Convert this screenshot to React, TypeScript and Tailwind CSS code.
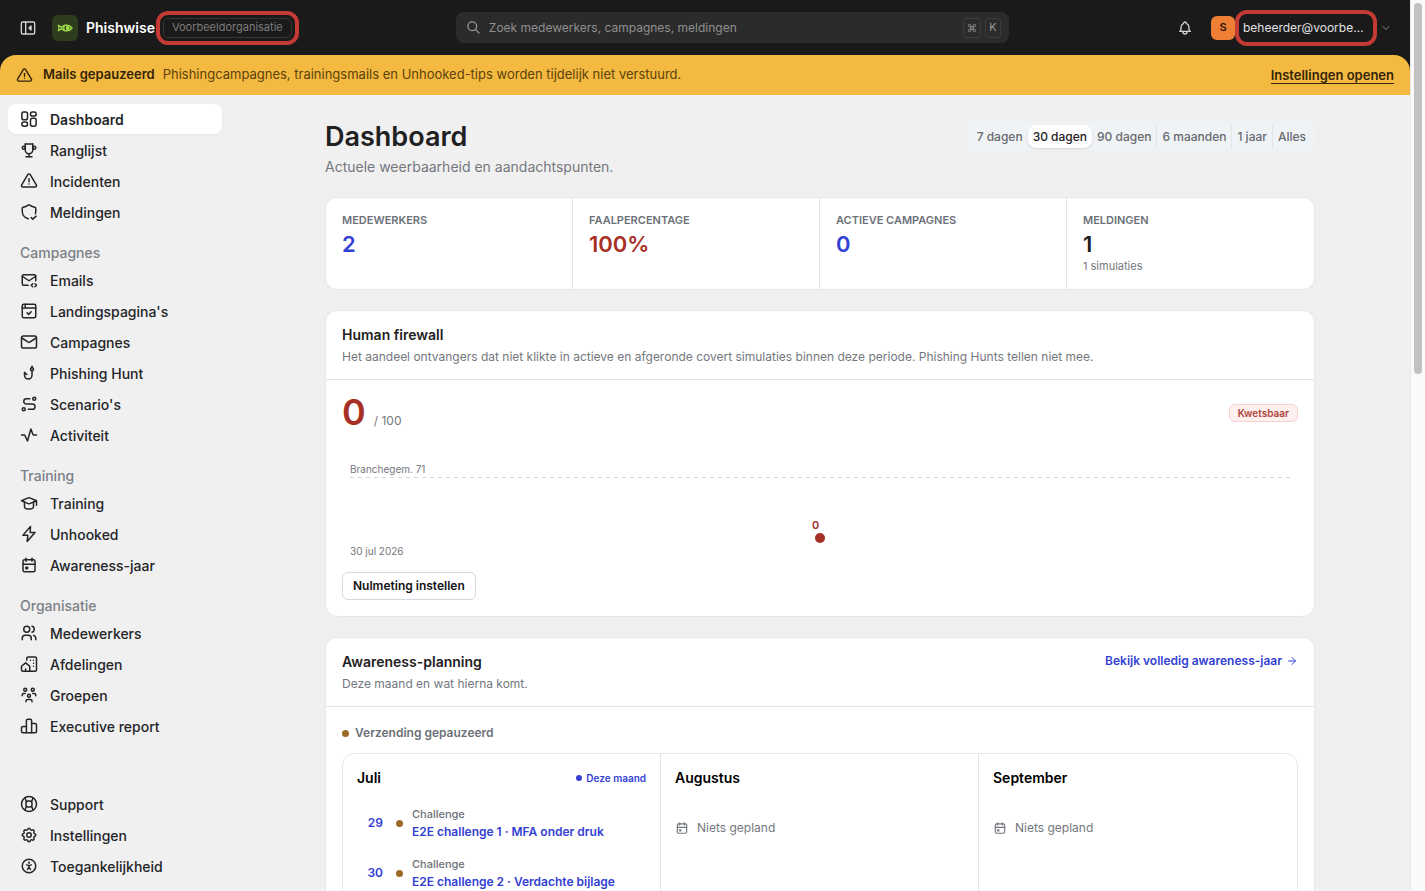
import type { ComponentType, ReactNode } from 'react'
import { useState } from 'react'
import clsx from 'clsx'
import { ArrowRight, ChevronDown, Command } from 'lucide-react'
import {
  TbAccessible,
  TbAlertTriangle,
  TbBell,
  TbCalendarEvent,
  TbFishHook,
  TbMail,
  TbMailCode,
  TbRoute,
  TbSearch,
  TbSettings,
  TbTrophy,
  TbUsers,
  TbUsersGroup,
} from 'react-icons/tb'

type IconProps = { className?: string }

type NavItem = {
  label: string
  icon: ComponentType<IconProps>
}

type NavGroup = {
  title?: string
  items: NavItem[]
}

function Glyph({ className, children }: IconProps & { children: ReactNode }) {
  return (
    <svg
      className={className}
      viewBox="0 0 24 24"
      fill="none"
      stroke="currentColor"
      strokeWidth="2"
      strokeLinecap="round"
      strokeLinejoin="round"
      aria-hidden="true">
      {children}
    </svg>
  )
}

const PanelIcon = (props: IconProps) => (
  <Glyph {...props}>
    <rect x="2" y="3" width="20" height="18" rx="2" />
    <path d="M8.500 3v18" />
    <path d="M16.500 9v6l-3-3z" fill="currentColor" />
  </Glyph>
)

const DashboardIcon = (props: IconProps) => (
  <Glyph {...props}>
    <rect x="2.500" y="2.500" width="7.500" height="10.500" rx="2.500" />
    <rect x="14" y="2.500" width="7.500" height="5.500" rx="2.500" />
    <rect x="14" y="11" width="7.500" height="10.500" rx="2.500" />
    <rect x="2.500" y="16" width="7.500" height="5.500" rx="2.500" />
  </Glyph>
)

const ShieldIcon = (props: IconProps) => (
  <Glyph {...props}>
    <path d="M11 21c-5-1.500-8-5-8-10.500V7c0-.8.500-1.200 1.200-1.400C7 5 9 4 11 2.700a1.800 1.800 0 0 1 2 0C15 4 17 5 19.800 5.600c.7.200 1.200.6 1.200 1.400v4c0 1.200-.2 2.300-.6 3.300" />
    <path d="M15 19.500l2 2l4.500-4" />
  </Glyph>
)

const LandingIcon = (props: IconProps) => (
  <Glyph {...props}>
    <rect x="3" y="3" width="18" height="18" rx="2" />
    <path d="M3 8h18M7 3v5M9.500 14.500l2 2l3.500-3.500" />
  </Glyph>
)

const MailIcon = (props: IconProps) => (
  <Glyph {...props}>
    <rect x="2" y="4" width="20" height="16" rx="2.500" />
    <path d="M3 7l8 5.300a2 2 0 0 0 2 0L21 7" />
  </Glyph>
)

const ActivityIcon = (props: IconProps) => (
  <Glyph {...props}>
    <path d="M2 12h3.500c.6 0 1 .3 1.200.8L10 20l4.500-16l2.700 7.300c.2.500.6.7 1.100.7H22" />
  </Glyph>
)

const TrainingIcon = (props: IconProps) => (
  <Glyph {...props}>
    <path d="M22 9L13 5.200a2.500 2.500 0 0 0-2 0L2 9l9 3.800a2.500 2.500 0 0 0 2 0L22 9v6" />
    <path d="M6 11v6c0 1.500 2.500 3 6 3s6-1.500 6-3v-6" />
  </Glyph>
)

const BoltIcon = (props: IconProps) => (
  <Glyph {...props}>
    <path d="M14 2L4 13.500h6.500L9.500 22L20 10h-6.500z" />
  </Glyph>
)

const BuildingIcon = (props: IconProps) => (
  <Glyph {...props}>
    <path d="M9 7V4.500a2 2 0 0 1 2-2h9a2 2 0 0 1 2 2v15a2 2 0 0 1-2 2h-7" />
    <path d="M2 15l5.500-4.500L13 15v6.500H4a2 2 0 0 1-2-2zM7.500 21.500v-3" />
    <path d="M14 7h.01M18 7h.01M18 11h.01M18 15h.01" />
  </Glyph>
)

const ReportIcon = (props: IconProps) => (
  <Glyph {...props}>
    <path d="M8.500 21V5a2 2 0 0 1 2-2h3a2 2 0 0 1 2 2v16" />
    <path d="M15.500 8.500H20a2 2 0 0 1 2 2V19a2 2 0 0 1-2 2H4a2 2 0 0 1-2-2v-4.500a2 2 0 0 1 2-2h4.500" />
  </Glyph>
)

const SupportIcon = (props: IconProps) => (
  <Glyph {...props}>
    <circle cx="12" cy="12" r="10" />
    <rect x="8" y="8" width="8" height="8" rx="3" />
    <path d="M8.500 8.500L6.500 4M15.500 8.500l2-4.500M8.500 15.500l-2 4.500M15.500 15.500l2 4.500" />
  </Glyph>
)

const FishLogo = (props: IconProps) => (
  <Glyph {...props}>
    <path d="M2 8C3.500 12 3.500 12 2 16L7 13c3.500 4.500 11 5 15.500-1C18 6 10.500 6.500 7 11z" />
    <path d="M11 8.500c-1.500 2.500-1.500 4.500 0 7" />
    <circle cx="16" cy="12" r="2" fill="currentColor" />
  </Glyph>
)

const navGroups: NavGroup[] = [
  {
    items: [
      { label: 'Dashboard', icon: DashboardIcon },
      { label: 'Ranglijst', icon: TbTrophy },
      { label: 'Incidenten', icon: TbAlertTriangle },
      { label: 'Meldingen', icon: ShieldIcon },
    ],
  },
  {
    title: 'Campagnes',
    items: [
      { label: 'Emails', icon: TbMailCode },
      { label: "Landingspagina's", icon: LandingIcon },
      { label: 'Campagnes', icon: MailIcon },
      { label: 'Phishing Hunt', icon: TbFishHook },
      { label: "Scenario's", icon: TbRoute },
      { label: 'Activiteit', icon: ActivityIcon },
    ],
  },
  {
    title: 'Training',
    items: [
      { label: 'Training', icon: TrainingIcon },
      { label: 'Unhooked', icon: BoltIcon },
      { label: 'Awareness-jaar', icon: TbCalendarEvent },
    ],
  },
  {
    title: 'Organisatie',
    items: [
      { label: 'Medewerkers', icon: TbUsers },
      { label: 'Afdelingen', icon: BuildingIcon },
      { label: 'Groepen', icon: TbUsersGroup },
      { label: 'Executive report', icon: ReportIcon },
    ],
  },
]

const footerItems: NavItem[] = [
  { label: 'Support', icon: SupportIcon },
  { label: 'Instellingen', icon: TbSettings },
  { label: 'Toegankelijkheid', icon: TbAccessible },
]

const periods = ['7 dagen', '30 dagen', '90 dagen', '6 maanden', '1 jaar', 'Alles']

const stats = [
  { label: 'Medewerkers', value: '2', color: 'text-[#3340d3]' },
  { label: 'Faalpercentage', value: '100%', color: 'text-[#a63025]' },
  { label: 'Actieve campagnes', value: '0', color: 'text-[#3340d3]' },
  { label: 'Meldingen', value: '1', color: 'text-[#1f2022]', note: '1 simulaties' },
]

const challenges = [
  { day: 29, title: 'E2E challenge 1 · MFA onder druk' },
  { day: 30, title: 'E2E challenge 2 · Verdachte bijlage' },
]

function Header() {
  return (
    <header className="flex h-[55px] shrink-0 items-center bg-[#1a1a1a] pr-[18px] pl-5">
      <button type="button" aria-label="Zijbalk inklappen" className="text-[#d4d4d4]">
        <PanelIcon className="size-4" />
      </button>
      <a href="#" className="ml-4 flex items-center gap-2 text-[14px] font-semibold text-white">
        <span className="flex size-[26px] items-center justify-center rounded-md bg-[#2f3d1f] text-[#a3e048]">
          <FishLogo className="size-4" />
        </span>
        Phishwise
      </a>
      <div className="relative ml-2 flex h-5 items-center rounded-[5px] border border-[#353535] px-2 text-[11px] text-[#7d7d7d]">
        Voorbeeldorganisatie
        <span className="absolute -inset-x-2 -inset-y-2 rounded-xl border-4 border-[#c43a34]" />
      </div>

      <div className="flex flex-1 justify-center pr-5 pl-4">
        <div className="flex h-[31px] w-full max-w-[553px] items-center gap-2 rounded-lg bg-[#2b2b2b] pr-2 pl-2.5 text-[#9a9a9a]">
          <TbSearch className="size-[15px] shrink-0" />
          <input
            type="search"
            aria-label="Zoeken"
            placeholder="Zoek medewerkers, campagnes, meldingen"
            className="min-w-0 flex-1 bg-transparent text-[12px] outline-none placeholder:text-[#8f8f8f]"
          />
          <div className="flex gap-1">
            <kbd className="flex h-5 w-[18px] items-center justify-center rounded border border-[#3d3d3d]">
              <Command className="size-[10px]" />
            </kbd>
            <kbd className="flex h-5 w-4 items-center justify-center rounded border border-[#3d3d3d] font-[Inter,sans-serif] text-[11px]">
              K
            </kbd>
          </div>
        </div>
      </div>

      <button type="button" aria-label="Notificaties" className="text-[#d4d4d4]">
        <TbBell className="size-4" />
      </button>
      <button type="button" className="ml-[18px] flex items-center text-[12px] text-[#e2e2e2]">
        <span className="flex size-6 items-center justify-center rounded-md bg-[#ef7f35] text-[11px] font-semibold text-[#2b1608]">
          S
        </span>
        <span className="relative ml-1 flex h-5 items-center px-1">
          <span className="w-[126px] text-left whitespace-nowrap">beheerder@voorbe…</span>
          <span className="absolute -inset-x-1 -inset-y-2 rounded-xl border-4 border-[#c43a34]" />
        </span>
        <ChevronDown className="ml-[7px] size-3 text-[#8a8a8a]" />
      </button>
    </header>
  )
}

function PauseBanner() {
  return (
    <div className="shrink-0 bg-[#1a1a1a]">
      <div className="flex h-10 items-center rounded-t-2xl bg-[#f4b940] px-4 text-[13px] text-[#5c430c]">
        <TbAlertTriangle className="size-[17px] text-[#33240a]" />
        <strong className="ml-2.5 font-semibold text-[#33240a]">Mails gepauzeerd</strong>
        <span className="ml-2">
          Phishingcampagnes, trainingsmails en Unhooked-tips worden tijdelijk niet verstuurd.
        </span>
        <a href="#" className="ml-auto border-b border-[#33240a] leading-4 font-semibold text-[#33240a]">
          Instellingen openen
        </a>
      </div>
    </div>
  )
}

function NavList({ items }: { items: NavItem[] }) {
  return (
    <ul className="flex flex-col gap-px">
      {items.map(({ label, icon: Icon }) => (
        <li key={label}>
          <a
            href="#"
            className={clsx(
              'flex h-[30px] items-center gap-3 rounded-lg px-3 text-[14px] text-[#242528]',
              label === 'Dashboard' ? 'bg-white font-semibold shadow-xs' : 'font-medium'
            )}>
            <Icon className="size-[18px] shrink-0" />
            {label}
          </a>
        </li>
      ))}
    </ul>
  )
}

function Sidebar() {
  return (
    <nav className="flex w-[230px] shrink-0 flex-col overflow-hidden px-2 pt-[9px] pb-2.5">
      {navGroups.map((group, i) => (
        <div key={i}>
          {group.title && (
            <h2 className="mt-3.5 h-6 px-3 text-[14px] leading-6 font-medium text-[#7b8087]">{group.title}</h2>
          )}
          <NavList items={group.items} />
        </div>
      ))}
      <div className="mt-auto">
        <NavList items={footerItems} />
      </div>
    </nav>
  )
}

function PeriodPicker() {
  const [active, setActive] = useState('30 dagen')

  return (
    <div className="mt-[3px] flex h-[29px] items-center rounded-lg bg-[#f0f3f6] px-1 text-[12px] font-medium text-[#66696e]">
      {periods.map((period, i) => (
        <button
          key={period}
          type="button"
          aria-pressed={period === active}
          onClick={() => setActive(period)}
          className={clsx(
            'h-[23px] px-[5px]',
            period === active && 'rounded-lg bg-white text-[#1f2022] shadow-sm',
            i > 2 && 'border-l border-[#e2e4e7]'
          )}>
          {period}
        </button>
      ))}
    </div>
  )
}

function StatCards() {
  return (
    <dl className="mt-5 grid h-[93px] grid-cols-4 divide-x divide-[#e3e4e6] rounded-xl border border-[#e6e7e8] bg-white">
      {stats.map((stat) => (
        <div key={stat.label} className="px-4 pt-3.5">
          <dt className="text-[11px] leading-4 font-semibold text-[#6c7178] uppercase">{stat.label}</dt>
          <dd className={clsx('text-[22px] leading-8 font-semibold', stat.color)}>{stat.value}</dd>
          {stat.note && <dd className="text-[11px] leading-3 text-[#73777e]">{stat.note}</dd>}
        </div>
      ))}
    </dl>
  )
}

function CardHeader({ title, text, action }: { title: string; text: string; action?: ReactNode }) {
  return (
    <div className="flex h-[69px] items-start justify-between border-b border-[#e3e4e6] px-4 pt-3.5">
      <div>
        <h2 className="text-[14px] leading-5 font-semibold text-[#1f2022]">{title}</h2>
        <p className="mt-0.5 text-[12px] leading-5 text-[#73777e]">{text}</p>
      </div>
      {action}
    </div>
  )
}

function FirewallChart() {
  return (
    <div className="relative mt-[31px] h-[99px] px-2 text-[10px] leading-4 text-[#73777e]">
      <span className="block">Branchegem. 71</span>
      <svg className="block h-px w-full" aria-hidden="true">
        <line x1="0" y1="0.5" x2="100%" y2="0.5" stroke="#d3d5d8" strokeWidth="1" strokeDasharray="4 4" />
      </svg>
      <span className="absolute top-[58px] left-1/2 -ml-2 text-[11px] leading-3 font-semibold text-[#a63025]">0</span>
      <span className="absolute top-[72px] left-1/2 -ml-[5px] size-2.5 rounded-full bg-[#a63025]" />
      <span className="absolute bottom-px left-2">30 jul 2026</span>
    </div>
  )
}

function HumanFirewall() {
  return (
    <section className="mt-5 rounded-xl border border-[#e6e7e8] bg-white">
      <CardHeader
        title="Human firewall"
        text="Het aandeel ontvangers dat niet klikte in actieve en afgeronde covert simulaties binnen deze periode. Phishing Hunts tellen niet mee."
      />
      <div className="p-4">
        <div className="flex items-center justify-between">
          <p className="flex items-baseline gap-2 text-[12px] text-[#73777e]">
            <span className="text-[36px] leading-8 font-semibold text-[#a63025]">0</span>/ 100
          </p>
          <span className="rounded-md border border-[#f5d3d0] bg-[#fdf0ef] px-2 text-[10px] leading-4 font-semibold text-[#b04439]">
            Kwetsbaar
          </span>
        </div>
        <FirewallChart />
        <button
          type="button"
          className="mt-3 h-7 rounded-md border border-[#d6d8db] bg-white px-2.5 text-[12px] font-semibold text-[#111213]">
          Nulmeting instellen
        </button>
      </div>
    </section>
  )
}

function EmptyMonth({ name }: { name: string }) {
  return (
    <div className="px-3.5 pt-3.5">
      <h3 className="text-[14px] leading-5 font-semibold text-black">{name}</h3>
      <p className="mt-[30px] flex items-center gap-2 text-[12px] leading-5 text-[#73777e]">
        <TbCalendarEvent className="size-[14px]" />
        Niets gepland
      </p>
    </div>
  )
}

function AwarenessPlanning() {
  return (
    <section className="mt-5 rounded-xl border border-[#e6e7e8] bg-white">
      <CardHeader
        title="Awareness-planning"
        text="Deze maand en wat hierna komt."
        action={
          <a href="#" className="flex items-center gap-1 text-[12px] leading-[18px] font-semibold text-[#3340d3]">
            Bekijk volledig awareness-jaar
            <ArrowRight className="size-3" />
          </a>
        }
      />
      <div className="p-4">
        <p className="flex items-center gap-1.5 text-[12px] leading-5 font-semibold text-[#6c7178]">
          <span className="size-[7px] rounded-full bg-[#9b6b25]" />
          Verzending gepauzeerd
        </p>
        <div className="mt-2.5 grid h-[220px] grid-cols-3 divide-x divide-[#e3e4e6] rounded-xl border border-[#e6e7e8]">
          <div className="px-3.5 pt-3.5">
            <div className="flex items-center justify-between">
              <h3 className="text-[14px] leading-5 font-semibold text-black">Juli</h3>
              <span className="flex items-center gap-1 text-[10px] font-semibold text-[#3340d3]">
                <span className="size-1.5 rounded-full bg-[#3340d3]" />
                Deze maand
              </span>
            </div>
            <ul className="mt-[17px]">
              {challenges.map((challenge) => (
                <li key={challenge.day} className="mb-[14px] flex items-center">
                  <span className="w-[26px] text-right text-[12px] font-semibold text-[#3340d3]">{challenge.day}</span>
                  <span className="mr-[9px] ml-[13px] size-[7px] rounded-full bg-[#9b6b25]" />
                  <div>
                    <p className="text-[11px] leading-[18px] font-medium text-[#6c7178]">Challenge</p>
                    <a href="#" className="block text-[12px] leading-[18px] font-semibold text-[#3340d3]">
                      {challenge.title}
                    </a>
                  </div>
                </li>
              ))}
            </ul>
          </div>
          <EmptyMonth name="Augustus" />
          <EmptyMonth name="September" />
        </div>
      </div>
    </section>
  )
}

export default function App() {
  return (
    <div className="flex h-screen overflow-hidden bg-[#f0f0f0] font-[Inter,'Open_Sans',sans-serif]">
      <div className="flex min-w-0 flex-1 flex-col">
        <Header />
        <PauseBanner />
        <div className="flex min-h-0 flex-1">
          <Sidebar />
          <main className="min-w-0 flex-1 overflow-hidden">
            <div className="mx-auto max-w-[990px] pt-6">
              <div className="flex items-start justify-between">
                <div>
                  <h1 className="text-[27px] leading-9 font-semibold text-[#1f2022]">Dashboard</h1>
                  <p className="mt-0.5 text-[14px] leading-5 text-[#73777e]">
                    Actuele weerbaarheid en aandachtspunten.
                  </p>
                </div>
                <PeriodPicker />
              </div>
              <StatCards />
              <HumanFirewall />
              <AwarenessPlanning />
            </div>
          </main>
        </div>
      </div>

      {/* Scroll track */}
      <div className="w-[15px] shrink-0 border-l border-[#e8e8e8] bg-[#fafafa] px-[3px] pt-[3px]">
        <div className="h-[371px] rounded-full bg-[#c1c1c1]" />
      </div>
    </div>
  )
}
